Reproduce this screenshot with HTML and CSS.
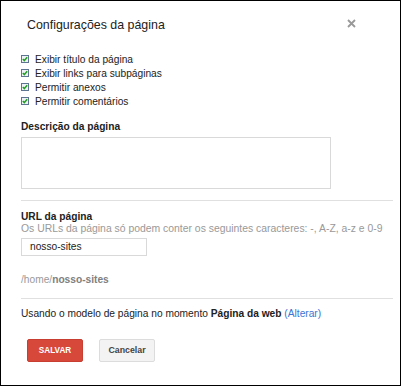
FILE: index.html
```html
<!DOCTYPE html>
<html lang="pt">
<head>
<meta charset="utf-8">
<title>Configurações da página</title>
<link rel="stylesheet" href="styles.css">
</head>
<body>
<div class="dialog">
  <div class="header">
    <h1 class="title">Configurações da página</h1>
    <span class="close" aria-label="Fechar">
      <svg width="9" height="9" viewBox="0 0 9 9"><path d="M1 1 L8 8 M8 1 L1 8" stroke="#999" stroke-width="1.8" fill="none"/></svg>
    </span>
  </div>
  <ul class="options">
    <li class="opt"><span class="cb"><svg width="8" height="8" viewBox="0 0 8 8"><rect x="0.5" y="0.5" width="7" height="7" fill="#eef2f6" stroke="#5d7590"/><path d="M1.8 4 L3.3 5.6 L6.2 2.3" stroke="#21a121" stroke-width="1.5" fill="none"/></svg></span>Exibir título da página</li>
    <li class="opt"><span class="cb"><svg width="8" height="8" viewBox="0 0 8 8"><rect x="0.5" y="0.5" width="7" height="7" fill="#eef2f6" stroke="#5d7590"/><path d="M1.8 4 L3.3 5.6 L6.2 2.3" stroke="#21a121" stroke-width="1.5" fill="none"/></svg></span>Exibir links para subpáginas</li>
    <li class="opt"><span class="cb"><svg width="8" height="8" viewBox="0 0 8 8"><rect x="0.5" y="0.5" width="7" height="7" fill="#eef2f6" stroke="#5d7590"/><path d="M1.8 4 L3.3 5.6 L6.2 2.3" stroke="#21a121" stroke-width="1.5" fill="none"/></svg></span>Permitir anexos</li>
    <li class="opt"><span class="cb"><svg width="8" height="8" viewBox="0 0 8 8"><rect x="0.5" y="0.5" width="7" height="7" fill="#eef2f6" stroke="#5d7590"/><path d="M1.8 4 L3.3 5.6 L6.2 2.3" stroke="#21a121" stroke-width="1.5" fill="none"/></svg></span>Permitir comentários</li>
  </ul>
  <h2 class="label">Descrição da página</h2>
  <div class="textarea"></div>
  <div class="sep"></div>
  <h2 class="label url-label">URL da página</h2>
  <p class="hint">Os URLs da página só podem conter os seguintes caracteres: -, A-Z, a-z e 0-9</p>
  <div class="input">nosso-sites</div>
  <p class="path"><span class="path-base">/home/</span><b class="path-name">nosso-sites</b></p>
  <div class="sep sep2"></div>
  <p class="template">Usando o modelo de página no momento <b>Página da web</b> <a class="link">(Alterar)</a></p>
  <div class="actions">
    <span class="btn primary">SALVAR</span>
    <span class="btn secondary">Cancelar</span>
  </div>
</div>
</body>
</html>
```
FILE: styles.css
```css
html, body {
  margin: 0;
  padding: 0;
  background: #fff;
}
body {
  font-family: "Liberation Sans", Arial, sans-serif;
  color: #222;
}
.dialog {
  width: 372px;
  height: 367px;
  border: 1px solid #000;
  padding: 17px 7px 0 20px;
  box-sizing: content-box;
  display: flex;
  flex-direction: column;
  align-items: flex-start;
  overflow: hidden;
}
.header {
  display: flex;
  justify-content: space-between;
  align-items: flex-start;
  align-self: stretch;
  padding: 0 37px 0 6px;
}
.title {
  margin: 0;
  font-size: 12.4px;
  line-height: 14px;
  font-weight: normal;
  color: #222;
}
.close {
  display: block;
  width: 9px;
  height: 9px;
  margin-top: 1px;
}
.close svg { display: block; }
.options {
  list-style: none;
  margin: 21px 0 0 0;
  padding: 0;
}
.opt {
  display: flex;
  align-items: flex-start;
  font-size: 10.2px;
  line-height: 14px;
  height: 14px;
  color: #222;
}
.cb {
  display: block;
  width: 8px;
  height: 8px;
  margin: 2px 6px 0 0;
}
.cb svg { display: block; }
.label {
  margin: 11px 0 0 0;
  font-size: 10.2px;
  line-height: 14px;
  font-weight: bold;
  color: #222;
}
.textarea {
  margin-top: 3px;
  width: 308px;
  height: 50px;
  border: 1px solid #d9d9d9;
}
.sep {
  align-self: stretch;
  height: 1px;
  background: #e0e0e0;
  margin-top: 11px;
}
.url-label {
  margin-top: 9.5px;
  line-height: 12px;
}
.hint {
  margin: 0;
  font-size: 10.4px;
  line-height: 12px;
  color: #999;
  white-space: nowrap;
}
.input {
  margin-top: 3px;
  width: 116px;
  height: 16px;
  border: 1px solid #d9d9d9;
  padding-left: 8px;
  font-size: 10.2px;
  line-height: 16px;
  color: #222;
}
.path {
  margin: 17.5px 0 0 0;
  font-size: 10.2px;
  line-height: 14px;
}
.path-base { color: #999; }
.path-name { color: #808080; font-weight: bold; }
.sep2 {
  margin-top: 10.5px;
}
.template {
  margin: 8.5px 0 0 0;
  font-size: 10.2px;
  line-height: 14px;
  color: #222;
}
.template b { font-weight: bold; }
.link {
  color: #3a74d4;
  text-decoration: none;
}
.actions {
  display: flex;
  gap: 16px;
  margin: 17.5px 0 0 6px;
}
.btn {
  box-sizing: border-box;
  width: 56px;
  height: 23px;
  display: flex;
  align-items: center;
  justify-content: center;
  font-weight: bold;
  border-radius: 2px;
}
.primary {
  background: #d8483a;
  border: 1px solid #c83f31;
  color: #fff;
  font-size: 8.2px;
}
.secondary {
  background: #f3f3f3;
  border: 1px solid #dcdcdc;
  color: #444;
  font-size: 8.8px;
}
```
